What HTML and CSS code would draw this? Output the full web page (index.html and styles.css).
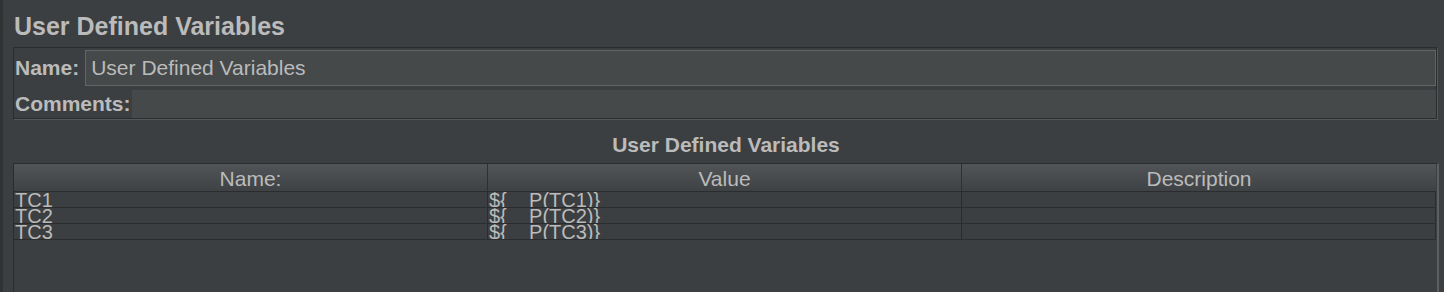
FILE: index.html
```html
<!DOCTYPE html>
<html>
<head>
    <title>User Defined Variables</title>
    <link rel="stylesheet" href="styles.css">
</head>
<body>
    <div class="strip"></div>
    <div class="main">
        <h1 class="title">User Defined Variables</h1>
        <div class="panel">
            <div class="row">
                <label class="label">Name:</label>
                <div class="field name-field">User Defined Variables</div>
            </div>
            <div class="row comments-row">
                <label class="label">Comments:</label>
                <div class="field comments-field"></div>
            </div>
        </div>
        <h2 class="table-title">User Defined Variables</h2>
        <div class="table">
            <div class="head">
                <div class="th">Name:</div>
                <div class="th">Value</div>
                <div class="th">Description</div>
            </div>
            <div class="tr">
                <div class="td">TC1</div>
                <div class="td">${__P(TC1)}</div>
                <div class="td"></div>
            </div>
            <div class="tr">
                <div class="td">TC2</div>
                <div class="td">${__P(TC2)}</div>
                <div class="td"></div>
            </div>
            <div class="tr">
                <div class="td">TC3</div>
                <div class="td">${__P(TC3)}</div>
                <div class="td"></div>
            </div>
        </div>
    </div>
</body>
</html>
```

FILE: styles.css
```css
html, body {
    height: 100%;
}

body {
    margin: 0;
    display: flex;
    background-color: #3c3f41;
    color: #bbbbbb;
    font-family: "Liberation Sans", Arial, sans-serif;
    overflow: hidden;
}

.strip {
    width: 3px;
    flex: none;
    background-color: #303234;
}

.main {
    flex: 1;
    display: flex;
    flex-direction: column;
    padding: 12px 5px 0 10px;
}

.title {
    margin: 0;
    font-size: 25px;
    line-height: 29px;
    font-weight: bold;
    padding-left: 1px;
}

.panel {
    margin: 6px 2px 0 0;
    border: 1px solid #2b2c2d;
    box-shadow: 1px 1px 0 #55585a;
    padding: 2px 0 0 1px;
}

.row {
    display: flex;
    align-items: center;
}

.label {
    font-size: 21px;
    font-weight: bold;
    line-height: 24px;
}

.field {
    flex: 1;
    background-color: #45494a;
    font-size: 21px;
    line-height: 24px;
}

.name-field {
    height: 34px;
    margin-left: 6px;
    border: 1px solid #646464;
    padding-left: 5px;
    display: flex;
    align-items: center;
}

.comments-row {
    margin-top: 4px;
}

.comments-field {
    height: 28px;
    margin-left: 1px;
}

.table-title {
    margin: 14px 0 0 0;
    text-align: center;
    font-size: 21px;
    line-height: 24px;
    font-weight: bold;
}

.table {
    flex: 1;
    margin-top: 6px;
    border-top: 1px solid #2b2c2d;
    border-left: 1px solid #2b2c2d;
    border-right: 2px solid #5c5f61;
}

.head, .tr {
    display: grid;
    grid-template-columns: repeat(3, 1fr);
    margin-right: 1px;
}

.head {
    background: linear-gradient(#525558, #3f4244);
    border-bottom: 1px solid #2b2c2d;
}

.th {
    height: 27px;
    line-height: 27px;
    padding-top: 1px;
    box-sizing: border-box;
    text-align: center;
    font-size: 21px;
    border-right: 1px solid #2e3032;
}

.th:last-child {
    border-right: none;
}

.tr {
    border-bottom: 1px solid #2b2c2d;
}

.td {
    height: 15px;
    line-height: 16px;
    font-size: 20px;
    padding-left: 1px;
    overflow: hidden;
    white-space: nowrap;
    border-right: 1px solid #2b2c2d;
}
```
